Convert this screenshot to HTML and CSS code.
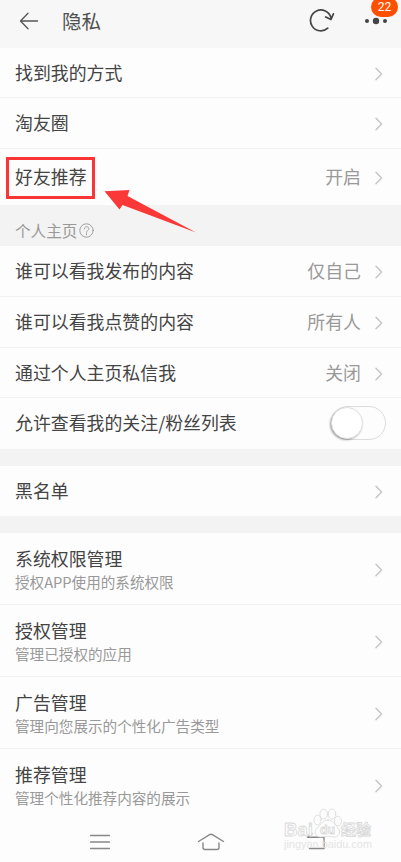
FILE: index.html
```html
<!DOCTYPE html>
<html lang="zh-CN">
<head>
<meta charset="utf-8">
<title>隐私</title>
<link rel="stylesheet" href="styles.css">
</head>
<body>
<svg class="defs" aria-hidden="true">
  <symbol id="chev" viewBox="0 0 8 14"><path d="M1 1.2 6.6 7 1 12.8"/></symbol>
</svg>
<div class="screen">
  <header class="bar">
    <svg class="back" width="20" height="18" viewBox="0 0 20 18"><path d="M18.5 9H2M9 1.2 1.5 9 9 16.8"/></svg>
    <h1>隐私</h1>
    <svg class="refresh" width="26" height="26" viewBox="0 0 26 26"><path d="M18.8 20.2A10.4 10.4 0 1 1 21.9 9.6M16.7 8.9 22 11.5 24.4 5.8"/></svg>
    <div class="more">
      <svg width="24" height="8" viewBox="0 0 24 8"><circle cx="3" cy="4" r="2"/><circle cx="12" cy="4" r="3.2"/><circle cx="21" cy="4" r="2"/></svg>
      <span class="badge">22</span>
    </div>
  </header>
  <main>
    <div class="row short"><span class="label">找到我的方式</span><svg class="chev"><use href="#chev"/></svg></div>
    <div class="row"><span class="label">淘友圈</span><svg class="chev"><use href="#chev"/></svg></div>
    <div class="row friend"><span class="label">好友推荐<i class="mark"></i></span><span class="value">开启</span><svg class="chev"><use href="#chev"/></svg>
      <svg class="pointer" width="94" height="48" viewBox="0 0 94 48"><path d="M1.5 3.2 26.5 2 24.5 8 93 44.5 19.5 17 16.5 21.5Z"/></svg>
    </div>
    <h2 class="section">个人主页<svg width="15" height="15" viewBox="0 0 15 15"><circle cx="7.5" cy="7.5" r="6.7"/><path d="M5.3 6C5.3 2.9 9.8 2.9 9.8 5.8 9.8 7.3 7.5 7.4 7.5 9.3M7.5 10.5V11.8"/></svg></h2>
    <div class="row"><span class="label">谁可以看我发布的内容</span><span class="value">仅自己</span><svg class="chev"><use href="#chev"/></svg></div>
    <div class="row"><span class="label">谁可以看我点赞的内容</span><span class="value">所有人</span><svg class="chev"><use href="#chev"/></svg></div>
    <div class="row short"><span class="label">通过个人主页私信我</span><span class="value">关闭</span><svg class="chev"><use href="#chev"/></svg></div>
    <div class="row last"><span class="label">允许查看我的关注/粉丝列表</span><span class="switch"><i></i></span></div>
    <div class="gap"></div>
    <div class="row short last"><span class="label">黑名单</span><svg class="chev"><use href="#chev"/></svg></div>
    <div class="gap"></div>
    <div class="row tall"><div class="stack"><span>系统权限管理</span><small>授权APP使用的系统权限</small></div><svg class="chev"><use href="#chev"/></svg></div>
    <div class="row tall"><div class="stack"><span>授权管理</span><small>管理已授权的应用</small></div><svg class="chev"><use href="#chev"/></svg></div>
    <div class="row tall"><div class="stack"><span>广告管理</span><small>管理向您展示的个性化广告类型</small></div><svg class="chev"><use href="#chev"/></svg></div>
    <div class="row tall last"><div class="stack"><span>推荐管理</span><small>管理个性化推荐内容的展示</small></div><svg class="chev"><use href="#chev"/></svg></div>
  </main>
  <nav class="nav">
    <svg width="20" height="18" viewBox="0 0 20 18"><path d="M.5 2.5h19M.5 9h19M.5 15.5h19"/></svg>
    <svg width="28" height="18" viewBox="0 0 28 18"><path d="M1.5 8.5 12.2 1.8Q14 .8 15.8 1.8L26.500 8.500M6 10v4.500Q6 16.500 8 16.500H20Q22 16.500 22 14.500V10"/></svg>
    <svg class="return" width="20" height="18" viewBox="0 0 20 18"><path d="M6 .8 1.500 4.200H18V15.500H3.500"/></svg>
  </nav>
  <div class="watermark">
    <svg width="100" height="50" viewBox="0 0 100 50">
      <g class="paw"><ellipse cx="34.500" cy="16" rx="3.600" ry="4.800"/><ellipse cx="40.700" cy="10" rx="3.800" ry="5"/><ellipse cx="49" cy="10" rx="3.800" ry="5"/><ellipse cx="55" cy="17" rx="3.600" ry="4.800"/><path d="M45 16C50 16 51 20 55 24 59 29 55 34 50 33 46 32 43 32 39 33 33 34 30 28 34 24 39 20 39 16 45 16Z"/></g>
      <text class="brand" x="1" y="32" textLength="29" lengthAdjust="spacingAndGlyphs">Bai</text>
      <text class="du" x="37" y="30" textLength="15" lengthAdjust="spacingAndGlyphs">du</text>
      <text class="brand cn" x="58" y="31" textLength="30">经验</text>
      <text class="url" x="1" y="44" textLength="88" lengthAdjust="spacingAndGlyphs">jingyan.baidu.com</text>
    </svg>
  </div>
</div>
</body>
</html>
```
FILE: styles.css
```css
* { box-sizing: border-box; }
body {
  margin: 0;
  background: #fdfdfd;
  font-family: "Noto Sans CJK SC", sans-serif;
  color: #444;
}
svg { display: block; flex: none; fill: none; stroke-linecap: round; stroke-linejoin: round; }
.defs { position: absolute; width: 0; height: 0; }
.screen { position: relative; width: 401px; height: 862px; overflow: hidden; display: flex; flex-direction: column; }

.bar { height: 48px; display: flex; align-items: center; padding: 0 13px 7px 19px; background: #f7f7f7; }
.back { stroke: #555; stroke-width: 1.3; }
h1 { margin: 0 auto 0 23px; font-size: 19.5px; line-height: 28px; font-weight: 400; color: #505050; }
.refresh { stroke: #444; stroke-width: 1.7; margin-right: 29px; }
.more { position: relative; }
.more svg { fill: #444; }
.badge {
  position: absolute; left: 7px; top: -20px; width: 27px; height: 20px;
  border-radius: 10px; background: #ff5000; color: #fff;
  font: 12px/19px Roboto, sans-serif; text-align: center; padding-top: 1px;
}

.row { position: relative; height: 51px; display: flex; align-items: center; padding: 0 18px 0 15px; border-bottom: 1px solid #f1f1f1; }
.row.short { height: 50px; }
.row.friend { height: 56px; border-bottom: 0; }
.row.tall { height: 72px; }
.row.last { border-bottom-color: transparent; }
.label { position: relative; top: -1px; margin-right: auto; font-size: 17.9px; line-height: 26px; }
.value { position: relative; top: -1px; margin-right: 14px; font-size: 17.9px; line-height: 26px; color: #999; }
.chev { width: 8px; height: 14px; margin-top: 2px; stroke: #c6c6c6; stroke-width: 1.5; }
.mark { position: absolute; left: -9px; top: -6px; width: 89px; height: 42px; border: 3px solid #fb3535; }
.pointer { position: absolute; left: 103px; top: 39px; z-index: 1; fill: #fb3838; }

.section {
  height: 41px; margin: 0; padding: 9px 0 0 15px; display: flex; align-items: center; gap: 2px;
  background: #f3f3f3; color: #999; font-size: 15.600px; font-weight: 400; line-height: 24px;
}
.section svg { stroke: #999; stroke-width: .9; }
.gap { height: 17px; background: #f3f3f3; }

.switch { width: 55px; height: 34px; margin-right: -3px; border: 1.500px solid #dcdcdc; border-radius: 17px; }
.switch i { display: block; width: 32px; height: 32px; margin: -.5px 0 0 -1px; border-radius: 50%; background: #fff; border: 1px solid #e0e0e0; box-shadow: -1px 1px 2px rgba(0, 0, 0, .35); }

.stack { display: flex; flex-direction: column; margin-right: auto; }
.stack span { font-size: 17.900px; line-height: 26px; }
.stack small { font-size: 14.600px; line-height: 22px; color: #999; }

.nav { height: 41px; display: flex; align-items: center; padding-left: 90px; gap: 87px; }
.nav svg { stroke: #888; stroke-width: 1.400; }
.nav .return { margin-left: -6px; }

.watermark { position: absolute; left: 283px; top: 804px; }
.watermark text, .paw { fill: #fdfdfd; stroke: #d8d8d8; stroke-width: .8; }
.brand { font: 700 19px "Liberation Sans", sans-serif; }
.watermark .cn { font: 700 15px "Noto Sans CJK SC", sans-serif; }
.du { font: 700 12px "Liberation Sans", sans-serif; }
.watermark .url { font: 11px "Liberation Sans", sans-serif; fill: #e4e4e4; stroke: none; }
```
